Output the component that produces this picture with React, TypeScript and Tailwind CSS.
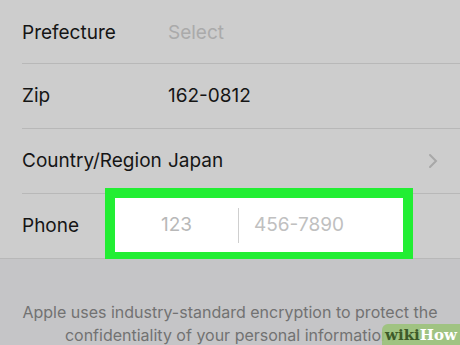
import React from "react";

const rows = [
  { label: "Prefecture", value: "Select", muted: true },
  { label: "Zip", value: "162-0812" },
  { label: "Country/Region", value: "Japan", chevron: true },
];

function Chevron() {
  return (
    <svg width="10" height="16" viewBox="0 0 10 16" className="mr-[22px]">
      <path d="M2 2l6 6-6 6" fill="none" stroke="#a8a8a8" strokeWidth="2" strokeLinecap="round" />
    </svg>
  );
}

export default function App() {
  return (
    <div
      className="w-[460px] h-[345px] overflow-hidden bg-[#cdcdcd] flex flex-col"
      style={{ fontFamily: "Inter, 'Liberation Sans', sans-serif" }}
    >
      <div className="pl-[22px] flex flex-col">
        {rows.map((r) => (
          <div key={r.label} className="h-[65px] flex items-center border-b border-[#b8b8b8] shrink-0 first:h-[64px] first:pt-[3px]">
            <span className="w-[146px] text-[19px] text-[#151515] whitespace-nowrap">{r.label}</span>
            <span className={`flex-1 text-[19px] ${r.muted ? "text-[#aaaaaa]" : "text-[#151515]"}`}>{r.value}</span>
            {r.chevron && <Chevron />}
          </div>
        ))}
      </div>
      <div className="relative h-[65px] shrink-0 border-b border-[#b8b8b8] pl-[22px] flex items-center">
        <span className="text-[19px] text-[#151515]">Phone</span>
        <div className="absolute left-[105px] top-[-6px] w-[308px] h-[74px] border-[10px] border-[#22ee33] bg-white flex items-center">
          <span className="w-[123px] text-center text-[19px] text-[#b8b8b8]">123</span>
          <div className="w-px h-[35px] bg-[#cfcfcf]" />
          <span className="pl-[15px] text-[19px] text-[#c0c0c0]">456-7890</span>
        </div>
      </div>
      <div className="relative flex-1 bg-[#c5c5c7] pt-[42px]">
        <p className="text-center text-[16px] leading-[23px] text-[#727272] px-[10px]">
          Apple uses industry-standard encryption to protect the confidentiality of your personal information.
        </p>
        <div
          className="absolute right-0 bottom-0 w-[78px] h-[23px] rounded-tl-[6px] bg-[#9bc27a]/90 flex items-center justify-center text-[15px] font-bold"
          style={{ fontFamily: "'DejaVu Serif', serif" }}
        >
          <span className="text-[#3d5a28]">wiki</span>
          <span className="text-white">How</span>
        </div>
      </div>
    </div>
  );
}
